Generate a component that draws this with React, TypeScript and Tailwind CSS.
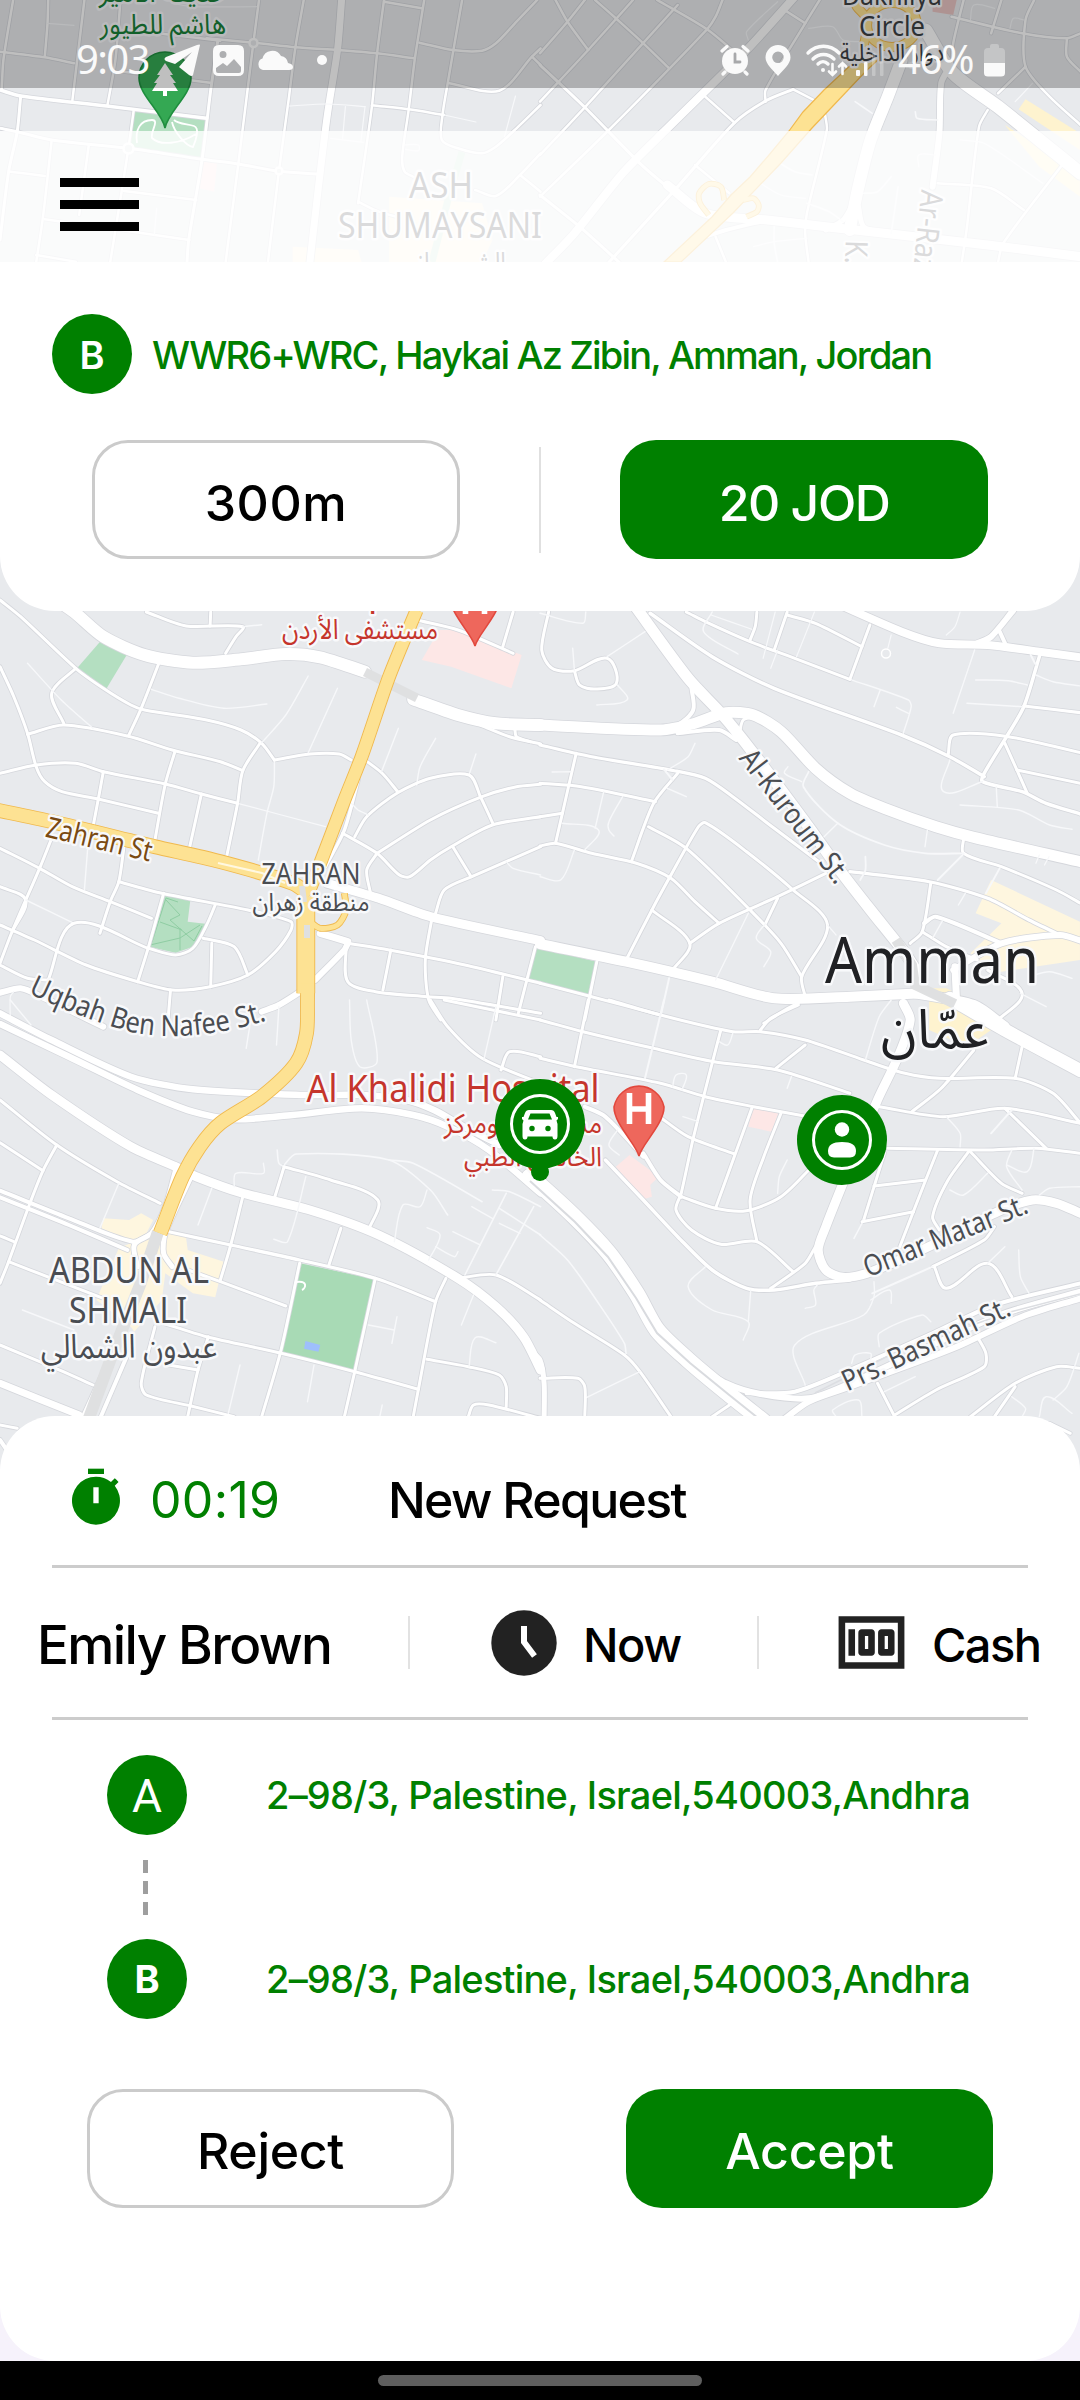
import React from "react";
import { MdMoney } from "react-icons/md";

type Road = [number, string];
interface Tile {
  x: number;
  y: number;
  roads: Road[];
}

// Road geometry, grouped by map tile: [width, points in tile units].
const TILES: Tile[] = [
  {
    x: 0,
    y: 0,
    roads: [
      [2.5, "38,0 10,180 5,265"],
      [2.5, "140,0 138,70 130,170"],
      [1.2, "138,70 215,76"],
      [2.5, "0,155 130,172 215,190"],
      [2.5, "245,0 210,303"],
      [3.5, "0,270 60,288 310,318 600,355"],
      [3, "60,288 50,395 25,515 0,720"],
      [3, "0,385 50,395 150,420 373,445 587,478 692,492 810,514 925,522"],
      [2.5, "350,0 335,180 312,316"],
      [2.5, "388,333 373,445 353,575 320,787"],
      [3, "632,125 612,270 587,478 548,720 543,787"],
      [2.5, "752,0 736,128 692,492 655,787"],
      [2.5, "640,122 500,105 380,90"],
      [2.5, "882,0 858,140 838,300 810,514 778,787"],
      [7, "992,0 980,150 950,350 925,560 900,787"],
      [2.5, "600,115 736,128 858,142 980,150 1095,160 1205,175"],
      [2.5, "1115,0 1095,160 1080,320 1040,610"],
      [2.5, "1232,0 1205,175 1187,328 1168,470 1175,515 1200,530"],
      [2.5, "1342,0 1300,250 1285,345 1283,420 1330,445 1400,460 1440,440 1500,385 1570,315"],
      [2.5, "1115,5 1225,25"],
      [2.5, "1218,128 1315,150 1400,152 1440,130 1500,65 1560,0"],
      [2.5, "1305,250 1450,272 1545,170 1570,145"],
      [2.5, "1545,170 1570,195"],
      [1.2, "838,318 950,312 1060,320"],
      [1.2, "1003,320 995,415"],
      [1.2, "1060,320 1048,425"],
      [1.2, "960,415 1055,427"],
      [2.5, "1080,316 1187,328 1290,345"],
      [1.2, "1290,345 1382,366"],
      [1.2, "1497,288 1465,410"],
      [2.5, "150,420 125,650 105,787"],
      [2.5, "30,515 130,528"],
      [2.5, "258,435 230,645"],
      [2.5, "360,573 570,600"],
      [2.5, "130,658 350,690 550,720"],
      [2.5, "105,765 220,785"],
      [1.2, "455,625 448,705"],
      [2.5, "1040,605 1100,635 1150,650"],
      [2.5, "1380,570 1440,588 1510,525 1570,460"],
      [2.5, "1510,525 1570,575"],
      [2.5, "610,248 360,215"],
      [1.2, "500,10 560,20 745,20"],
      [1.2, "1175,435 1215,435 1215,452 1178,448"],
    ],
  },
  {
    x: 540,
    y: 0,
    roads: [
      [8, "740,-10 600,150 360,395 240,520 100,700 10,797"],
      [9, "370,555 480,640 660,660 830,680 1000,700 1300,735 1570,770"],
      [4, "480,710 540,690 640,665"],
      [2.5, "45,0 80,65 140,150"],
      [2.5, "0,160 80,65 130,0"],
      [2.5, "160,0 220,55 300,130 375,205"],
      [2.5, "270,0 140,150 0,305"],
      [2.5, "400,15 130,322 0,465"],
      [2.5, "340,0 485,88 575,165"],
      [2.5, "530,0 510,50 485,88 200,390 0,590"],
      [2.5, "812,0 770,70 655,270 655,305"],
      [2.5, "710,30 770,70"],
      [1.2, "690,5 600,95 605,120"],
      [3, "735,268 660,300 565,368 400,560 200,787"],
      [2.5, "480,290 565,368"],
      [2.5, "735,268 795,300"],
      [3, "0,195 130,322 290,490 380,570"],
      [3, "0,585 115,680 230,787"],
      [12, "1050,180 1010,290 960,420 925,560 905,660 900,690"],
      [13, "1120,90 1200,220 1330,320 1570,520"],
      [6, "1190,200 1165,250 1160,400 1140,560"],
      [2.5, "1230,0 1200,130 1195,210"],
      [2.5, "1340,0 1310,100"],
      [2.5, "1195,50 1400,100 1530,115 1570,100"],
      [2.5, "1435,0 1410,60 1410,200 1480,290 1570,375"],
      [2.5, "1530,115 1530,170 1570,215"],
      [2.5, "1410,200 1330,280"],
      [1.2, "1430,250 1380,305"],
      [1.2, "1250,60 1260,15 1320,25"],
      [1.2, "1365,85 1375,55 1405,60"],
      [2.5, "1300,330 1275,380 1240,680 1225,787"],
      [2.5, "1155,550 1310,565 1405,630"],
      [2.5, "1520,490 1345,730 1330,787"],
      [2.5, "828,345 833,390 775,640 770,700 780,787"],
      [1.6, "690,485 740,515 790,525"],
      [1.2, "640,550 700,585 770,595"],
      [2.5, "550,580 450,495"],
      [1.6, "915,305 965,340"],
      [1.6, "1090,335 1095,355 1155,360"],
      [2.5, "510,710 540,787"],
      [5, "830,690 880,660 905,620"],
      [5, "1000,700 940,680 925,620"],
      [1.6, "775,610 840,635 880,665"],
      [1.6, "940,580 980,575 1020,530"],
      [1.6, "1040,560 1020,700"],
      [1.2, "780,85 850,80 880,120 930,125"],
      [1.2, "620,740 680,725 775,715"],
      [1.6, "680,680 680,730 690,787"],
      [1.2, "1100,500 1100,465 1150,465"],
      [1.2, "1220,420 1290,430 1460,550"],
    ],
  },
  {
    x: 0,
    y: 600,
    roads: [
      [12, "150,-10 215,36 300,110 420,165 560,188 700,178 830,162 930,172 1060,215"],
      [12, "1200,298 1330,345 1440,370 1570,375"],
      [9, "950,850 1100,895 1250,950 1570,1022"],
      [3.5, "1040,540 1000,690 945,800"],
      [6, "915,1140 1000,1050 1010,1030"],
      [7, "930,1000 1010,1025"],
      [3, "1010,1030 1130,1050 1350,1095 1570,1150"],
      [3, "1005,1040 1010,1145 1090,1175 1240,1190 1310,1195 1570,1240"],
      [3, "0,0 60,50 220,205 300,265 380,315 420,330 600,360 700,390 760,430 797,480"],
      [1.4, "797,480 795,560 775,640 750,780"],
      [3, "0,200 40,290 80,400 105,500 130,545 180,575 285,597 460,640"],
      [3, "80,403 185,375 370,408 500,450 640,485 705,512"],
      [3, "220,205 150,280 185,370"],
      [1.4, "80,190 178,300 270,385"],
      [3, "465,180 410,325 373,408"],
      [1.4, "440,268 520,295 650,325 775,312"],
      [3, "0,520 105,495 220,490 300,515 480,552 585,582 690,610"],
      [1.2, "690,610 945,680"],
      [3, "508,455 480,552 450,720"],
      [3, "300,515 285,600 270,680"],
      [3, "585,582 550,745"],
      [3, "755,430 705,512 690,610 658,770"],
      [1.4, "895,228 830,345 760,428"],
      [3, "797,480 900,462 985,462 1020,480"],
      [1.4, "980,265 895,458"],
      [3, "1060,480 1110,520 1155,575"],
      [1.4, "1157,385 1108,515"],
      [1.4, "1265,415 1220,500 1210,555"],
      [1.4, "1382,462 1362,525"],
      [3, "1030,710 1065,650 1155,578 1250,535 1362,525 1395,590 1432,672"],
      [3, "1095,760 1250,660 1400,590 1500,560 1570,553"],
      [3, "995,700 1095,760 1160,825 1190,830 1250,780 1310,740 1430,675 1570,650"],
      [3, "1095,760 1065,810 1075,875"],
      [3, "1315,740 1368,830"],
      [3, "1265,940 1290,870 1370,830 1570,740"],
      [3, "1255,950 1235,1080 1245,1200 1280,1260"],
      [3, "425,36 540,78 705,80 685,110 655,160"],
      [3, "612,36 610,78"],
      [1.4, "705,80 760,74"],
      [3, "1210,60 1330,90 1490,160"],
      [3, "1490,36 1460,140"],
      [3, "1395,375 1480,410 1570,432"],
      [3, "1495,385 1500,410 1540,425"],
      [1.4, "1020,610 1040,630 1070,645"],
      [1.4, "1470,785 1490,805 1570,825"],
      [3, "0,745 115,805 210,860 320,905 440,955"],
      [3, "150,715 115,805 35,995 0,1090"],
      [3, "360,740 345,845 320,905 290,1000"],
      [3, "345,845 470,880 720,930 845,965 845,990 800,1055 720,1125 610,1160 500,1170 400,1145 250,1095 100,1020 0,975"],
      [3, "0,860 75,900 35,995"],
      [1.4, "75,900 215,970"],
      [3, "140,1140 215,970 430,1045"],
      [3, "475,880 430,1045 400,1145"],
      [3, "430,1045 510,1065 560,1045 600,975 625,915"],
      [3, "590,1015 680,1040 720,1125"],
      [3, "615,1030 612,1160"],
      [3, "495,1170 488,1260"],
      [3, "0,1095 80,1135 140,1140"],
      [1.4, "255,740 245,870"],
      [6, "0,1178 60,1165 120,1190 300,1280"],
      [3, "1135,1050 1112,1170"],
      [3, "1460,1130 1440,1260"],
      [3, "1555,1040 1505,1240"],
      [1.2, "30,1260 30,1190 40,1175"],
      [6, "760,1235 810,1215 880,1170"],
    ],
  },
  {
    x: 540,
    y: 600,
    roads: [
      [11, "270,10 430,235 530,345 620,460 780,680 870,810 960,930 1060,1060 1110,1140"],
      [11, "0,375 350,390 450,370 540,338 620,345 700,395 800,505 900,580 1000,625 1150,680 1260,712 1570,785"],
      [3.5, "320,40 500,170 680,265 1050,405 1190,470 1290,530"],
      [10, "0,1032 250,1085 500,1145 680,1195 900,1190 1110,1180"],
      [8, "850,5 1050,95 1160,130 1300,135 1450,155 1570,172"],
      [6, "1375,30 1310,110 1270,130"],
      [4, "1335,95 1355,140"],
      [4, "440,265 445,330 400,375 350,385"],
      [4, "400,400 520,390 570,420"],
      [3, "580,395 590,360 620,350"],
      [3, "425,36 480,65 610,125 740,175 900,238"],
      [1.4, "900,238 1070,300 1078,320 1055,400"],
      [1.4, "988,270 970,320"],
      [1.4, "1035,322 1070,340"],
      [3, "958,75 900,238"],
      [3, "718,45 800,70 935,140"],
      [3, "718,36 680,150"],
      [3, "630,36 625,80 610,120"],
      [1.4, "500,36 475,95 575,162"],
      [1.2, "683,36 648,175"],
      [1.2, "690,150 670,205"],
      [1.2, "797,36 745,170"],
      [1.2, "497,45 615,88"],
      [1.2, "1020,105 1010,145"],
      [1.2, "1220,36 1205,80 1180,105"],
      [3.5, "1450,170 1405,320 1355,410 1290,520 1285,545 1400,575 1470,610 1570,642"],
      [2, "1425,165 1440,195"],
      [3, "1405,318 1570,338"],
      [3, "1185,465 1200,405 1360,410 1570,458"],
      [3, "1350,430 1385,510 1415,580"],
      [3, "1385,510 1570,550"],
      [1.4, "1265,240 1360,242 1415,255"],
      [1.4, "1240,310 1400,320"],
      [1.4, "1440,225 1490,245 1570,258"],
      [1.4, "1262,150 1200,340"],
      [1.4, "1190,480 1172,575 1285,545"],
      [1.4, "1325,560 1328,620"],
      [1.4, "1220,615 1390,630 1480,675 1545,688"],
      [3, "25,36 5,150 35,205 100,212 195,175 222,250 160,267 115,255 100,212"],
      [1.4, "100,212 95,145"],
      [1.4, "195,170 305,95"],
      [1.4, "225,255 253,300 165,315"],
      [1.4, "0,40 125,70 133,36"],
      [3.2, "0,435 150,470 390,512 480,535 560,590 680,685 810,785"],
      [3, "105,460 65,640 45,730"],
      [3, "0,550 120,560 335,605"],
      [3, "400,520 330,610 265,785"],
      [3, "0,650 65,640"],
      [3, "0,738 45,730 150,760 280,790 380,835 450,905 520,970"],
      [1.4, "450,430 430,470 370,510"],
      [2, "360,508 385,540"],
      [1.4, "370,565 425,590"],
      [1.4, "35,516 90,515"],
      [1.4, "185,575 160,685"],
      [1.4, "65,670 170,690 130,750"],
      [1.4, "240,590 200,665 200,690 215,708"],
      [1.4, "100,750 60,840 0,830"],
      [3, "250,1080 330,920 375,835 460,680 480,668 600,755 735,870 835,975 760,1130 770,1190"],
      [1.2, "835,975 860,1005"],
      [3, "315,680 425,745 610,930 700,1030 760,1130"],
      [3, "325,930 435,1030 385,1110"],
      [3, "435,1030 520,970 690,890 830,820"],
      [3, "690,895 655,970"],
      [1.4, "605,940 510,1140"],
      [1.4, "655,970 628,1015 670,1055 650,1100"],
      [3.2, "900,815 1130,845 1300,895 1420,960 1510,1005"],
      [3, "1230,715 1230,760 1340,800 1500,870 1570,910"],
      [1.8, "1230,762 1155,840"],
      [1.8, "780,515 765,560 865,670 1000,735 1120,760 1230,760"],
      [1.4, "720,500 710,520 760,545"],
      [1.4, "1125,690 1118,740"],
      [1.4, "865,670 825,710"],
      [1.8, "945,770 945,810 930,840"],
      [3, "1135,850 1110,995 1075,1030"],
      [4, "1115,970 1150,950 1340,1030"],
      [6, "1200,1110 1340,1030 1510,1005 1570,1022"],
      [3, "1110,995 1180,1040 1270,1080"],
      [1.4, "1170,960 1140,1015"],
      [1.8, "1335,805 1295,880"],
      [1.4, "1235,880 1215,915"],
      [1.2, "1450,765 1440,790"],
      [1.2, "1478,770 1465,795"],
      [10, "1090,1180 1260,1215 1350,1280"],
      [7, "1205,1100 1210,1210"],
      [3, "1300,1110 1400,1180 1330,1260"],
      [1.4, "1395,1180 1470,1220"],
      [3, "0,1150 150,1190 350,1245"],
      [3, "165,1085 130,1260"],
      [2, "375,1135 350,1250"],
      [3, "750,1210 720,1225 650,1270"],
      [1.4, "1420,1130 1480,1115 1545,1135"],
    ],
  },
  {
    x: 0,
    y: 1000,
    roads: [
      [6.5, "0,40 150,120 380,230 560,268 880,285 1050,285 1180,300 1260,330 1330,370 1450,435"],
      [6.5, "0,72 200,170 400,270 560,335 680,358 850,345 1050,325 1200,345 1300,380 1420,450 1570,580"],
      [9, "0,165 150,285 380,440 510,500 570,530 700,578 900,630 1100,705 1330,835 1440,920 1520,1010 1570,1110"],
      [5, "510,510 480,620 440,700 390,735 400,800"],
      [5, "555,530 480,700 475,760 500,800"],
      [4, "325,1060 240,1252"],
      [4, "372,1060 292,1252"],
      [7, "0,1150 230,1245"],
      [3, "0,300 165,435 340,545 465,610"],
      [3, "0,428 125,512"],
      [3, "165,435 125,512 85,615 25,785 0,850"],
      [4, "0,572 200,655 385,725 440,700"],
      [4, "0,592 200,675 370,750"],
      [3, "0,708 40,725"],
      [1.4, "345,550 290,685"],
      [3, "25,785 150,835 300,895"],
      [1.4, "65,930 215,990"],
      [3, "0,1035 150,1100 270,1155"],
      [3.2, "490,695 670,735 870,780 1090,835 1265,905"],
      [3, "705,590 670,735 640,840"],
      [3, "520,800 640,845 830,918"],
      [1.4, "615,565 575,675"],
      [3, "825,500 797,595"],
      [1.6, "805,450 810,490 825,500"],
      [3, "825,500 960,540 1097,600 1070,690"],
      [1.6, "825,495 860,462 1130,480 1250,570 1300,645"],
      [1.6, "1130,480 1200,490 1400,605"],
      [1.4, "888,530 835,725 795,718"],
      [1.4, "680,560 685,520 765,520 765,490"],
      [1.4, "1240,570 1220,620 1170,615 1145,725"],
      [3, "990,685 955,795"],
      [3, "870,790 815,1055 760,1250"],
      [3, "1090,835 1030,1115 1000,1250"],
      [3, "460,965 600,1010 810,1058 1030,1115 1215,1168"],
      [3, "1295,835 1265,905 1215,1168 1200,1250"],
      [3, "1240,1078 1360,1100 1450,1125 1470,1160 1470,1220"],
      [3, "1360,1250 1375,1215 1420,1215 1570,1255"],
      [3, "605,1010 575,1110 545,1250"],
      [3, "575,1110 490,1095"],
      [3, "450,980 410,1150 425,1185 555,1218 680,1250"],
      [1.4, "697,1095 663,1240"],
      [1.4, "912,1095 893,1205"],
      [1.4, "1110,1215 1103,1250"],
      [1.4, "1070,975 1145,990"],
      [1.4, "1153,950 1138,1030"],
      [1.4, "1375,885 1340,975"],
      [1.4, "1440,1028 1380,1013 1362,1100"],
      [3, "1330,835 1440,825 1570,900"],
      [1.6, "1470,580 1350,825"],
      [1.6, "1550,620 1440,825"],
      [1.6, "1430,570 1480,575 1570,620"],
      [1.4, "1370,620 1430,655"],
      [1.6, "1450,625 1570,705"],
      [1.4, "1315,695 1395,735"],
      [1.4, "1240,683 1278,705 1245,780"],
      [1.4, "1265,740 1320,770 1330,755"],
      [3, "1250,0 1300,80 1400,175 1570,250"],
      [3, "1570,170 1480,155 1455,210"],
      [3, "1290,0 1570,60"],
      [1.4, "1440,20 1405,180"],
      [1.4, "1015,0 1020,120 1045,200 1095,185 1065,0"],
      [1.4, "725,80 715,145"],
      [1.4, "810,20 803,135"],
      [1.4, "1450,670 1510,700"],
      [1.4, "30,0 90,75"],
      [3, "0,1275 50,1285"],
      [4, "0,1320 20,1350"],
    ],
  },
  {
    x: 540,
    y: 1000,
    roads: [
      [5, "-30,1050 0,1080 12,1150 12,1260"],
      [16, "-30,530 0,555 100,650 200,760 280,880 340,990 430,1080 540,1175 650,1265"],
      [6, "430,1080 540,1150 640,1182 780,1195 900,1150 1150,1030 1350,940 1570,875"],
      [4, "600,1180 740,1175 900,1110 1140,1000 1320,915 1570,850"],
      [6, "700,1265 780,1205 900,1160 1200,1045 1400,950 1570,895"],
      [9, "1055,10 1075,60 1040,170 980,300 880,550 830,680 808,750 830,810 880,832 950,820 1150,730 1330,635 1430,600 1500,610 1570,640"],
      [13, "1190,-5 1350,90 1570,212"],
      [3, "0,60 125,95 330,145 505,185 690,210 900,280"],
      [3, "200,0 350,45 560,95 640,95 770,120 940,180 1060,220 1160,235 1380,235 1490,280 1570,370"],
      [3, "0,175 105,200 350,250 480,290 620,320 780,350"],
      [3, "140,0 100,200"],
      [2, "360,0 305,235"],
      [3, "525,90 475,290 445,415 410,580 395,630 440,690 525,733 630,725 735,815"],
      [3, "750,15 670,55 640,90"],
      [3, "770,135 685,205"],
      [1.4, "520,125 545,135 560,100"],
      [1.4, "385,260 395,225 425,225 412,270"],
      [1.4, "1020,0 985,50 945,180"],
      [3, "615,325 510,625"],
      [3, "700,340 650,470 610,600 630,725"],
      [3, "410,590 510,625 600,632 700,590 790,500"],
      [3, "340,345 430,410 565,462"],
      [4, "300,460 350,540 410,590"],
      [4, "130,320 190,350 300,470"],
      [3.5, "190,480 300,600 400,710 500,810 600,865 680,870 800,850 900,840"],
      [3, "670,865 770,790 800,740"],
      [1.4, "480,800 430,860 500,930 605,965 590,1020"],
      [1.4, "612,870 605,965"],
      [1.6, "0,705 80,780 170,910 245,1030 250,1060"],
      [3, "0,900 100,970 245,1065 290,1115 380,1250"],
      [1.4, "290,1115 130,1195"],
      [3, "0,1135 110,1135 130,1160 130,1250"],
      [1.4, "770,1155 740,1035 940,945 970,890 970,845"],
      [1.4, "985,1040 985,1000 1110,945 1135,965"],
      [1.4, "1020,910 1015,870 960,900"],
      [1.4, "770,925 800,915 795,870 805,855"],
      [1.4, "905,1090 915,1065 960,1060 960,1080"],
      [3, "985,320 1170,350 1350,325 1570,370"],
      [3, "1080,335 1165,265 1260,150"],
      [3, "1400,140 1380,235"],
      [3, "1350,325 1470,445"],
      [2, "1370,330 1310,400"],
      [3, "1010,445 1290,450 1440,445 1570,460"],
      [3, "1000,460 940,660"],
      [1.6, "940,660 912,715"],
      [3, "1155,450 1120,540 1045,740"],
      [3, "970,558 1120,540"],
      [3, "935,665 1085,635"],
      [3, "1245,455 1185,540 1140,650 1160,690"],
      [3, "1250,455 1340,550 1400,580"],
      [1.4, "1190,570 1230,585 1300,520"],
      [1.4, "1370,450 1355,500 1400,570"],
      [1.4, "1435,445 1415,515 1355,495"],
      [1.4, "1180,350 1220,400 1220,440"],
      [1.4, "1450,585 1480,565 1570,560"],
      [3, "1145,800 1180,865 1300,790 1370,890"],
      [3, "1320,680 1290,720 1140,800"],
      [2, "1140,800 965,880"],
      [1.4, "1390,750 1395,830 1420,880"],
      [1.4, "1350,740 1300,790"],
      [3, "980,1150 1030,1250"],
      [3, "1030,1245 1150,1170 1290,1100 1295,1060 1270,1010"],
      [3, "1250,1250 1380,1150 1500,1100 1570,1105"],
      [3, "1320,1250 1380,1160"],
      [1.4, "860,1250 850,1230 925,1200 935,1250"],
      [1.4, "1000,1175 1090,1130"],
      [1.4, "1450,1250 1470,1190 1545,1240"],
      [1.4, "1370,1190 1410,1225 1400,1250"],
      [1.4, "1565,1060 1530,1160 1490,1200"],
      [3, "500,1250 550,1215"],
      [1.4, "718,480 695,530 690,580"],
      [1.4, "730,230 718,265"],
      [1.4, "415,350 460,365"],
      [1.4, "230,465 200,435 225,390"],
      [3, "1480,1270 1540,1300"],
    ],
  },
];

interface Area {
  x: number;
  y: number;
  fill: string;
  pts: string;
}

const AREAS: Area[] = [
  { x: 0, y: 0, fill: "#b4dfc1", pts: "390,333 598,357 588,475 377,450" },
  { x: 0, y: 0, fill: "#fde7e6", pts: "590,485 630,490 622,575 578,565" },
  { x: 0, y: 0, fill: "#fef6df", pts: "1130,590 1400,610 1430,720 1400,787 1130,787" },
  { x: 0, y: 0, fill: "#fef6df", pts: "850,740 1040,750 1050,787 850,787" },
  { x: 540, y: 0, fill: "#e9c5c3", pts: "1140,0 1210,0 1200,45 1140,35" },
  { x: 540, y: 0, fill: "#fef3cf", pts: "1410,298 1568,400 1568,450 1390,328" },
  { x: 540, y: 0, fill: "#fef3cf", pts: "1350,375 1568,520 1568,590 1450,500" },
  { x: 0, y: 600, fill: "#b4dfc1", pts: "305,108 378,148 308,268 225,203" },
  { x: 0, y: 600, fill: "#b4dfc1", pts: "478,885 553,898 545,965 603,972 575,1035 510,1058 432,1040" },
  { x: 0, y: 600, fill: "#fde7e6", pts: "1275,90 1330,90 1515,165 1485,265 1310,200 1225,180" },
  { x: 540, y: 600, fill: "#b4dfc1", pts: "-20,1040 0,1045 165,1085 140,1185 0,1145 -35,1137" },
  { x: 540, y: 600, fill: "#fef6df", pts: "1310,840 1568,965 1568,1080 1310,1120 1250,1060 1340,970 1265,940" },
  { x: 540, y: 600, fill: "#fef3cf", pts: "1130,1165 1180,1165 1325,1240 1310,1290 1240,1340 1130,1290" },
  { x: 0, y: 1000, fill: "#a8dab5", pts: "872,790 1090,838 1030,1112 815,1055" },
  { x: 0, y: 1000, fill: "#9ebffb", pts: "887,1023 930,1035 925,1055 883,1046" },
  { x: 0, y: 1000, fill: "#fef6df", pts: "300,655 375,660 410,640 445,660 420,710 370,720 295,685" },
  { x: 0, y: 1000, fill: "#fef6df", pts: "490,700 540,710 545,750 650,785 625,892 560,880 480,820 470,900 390,995 380,980 280,900 300,850 345,745 400,720" },
  { x: 540, y: 1000, fill: "#fde7e6", pts: "260,465 345,530 320,555 325,590 300,598 220,500" },
  { x: 540, y: 1000, fill: "#fde7e6", pts: "618,320 692,340 672,395 605,380" },
];

function project(pts: string, ox: number, oy: number): [number, number][] {
  return pts.split(" ").map((p) => {
    const [x, y] = p.split(",").map(Number);
    return [ox + x / 2.904, oy + y / 3];
  });
}

// Catmull-Rom spline through the projected points.
function smooth(pts: string, ox: number, oy: number): string {
  const p = project(pts, ox, oy);
  let d = `M${p[0][0].toFixed(1)} ${p[0][1].toFixed(1)}`;
  for (let i = 0; i < p.length - 1; i++) {
    const a = p[Math.max(i - 1, 0)];
    const b = p[i];
    const c = p[i + 1];
    const e = p[Math.min(i + 2, p.length - 1)];
    const len = Math.hypot(c[0] - b[0], c[1] - b[1]);
    const t1 = Math.hypot(c[0] - a[0], c[1] - a[1]) || 1;
    const t2 = Math.hypot(e[0] - b[0], e[1] - b[1]) || 1;
    const k = len * 0.27;
    const x1 = b[0] + ((c[0] - a[0]) / t1) * k;
    const y1 = b[1] + ((c[1] - a[1]) / t1) * k;
    const x2 = c[0] - ((e[0] - b[0]) / t2) * k;
    const y2 = c[1] - ((e[1] - b[1]) / t2) * k;
    d += `C${x1.toFixed(1)} ${y1.toFixed(1)} ${x2.toFixed(1)} ${y2.toFixed(1)} ${c[0].toFixed(1)} ${c[1].toFixed(1)}`;
  }
  return d;
}

const ROADS = TILES.flatMap((t) => t.roads.map(([w, pts]) => ({ w, d: smooth(pts, t.x, t.y) })));

const HIGHWAYS = [
  { w: 12, d: smooth("1210,30 1130,230 1050,470 1000,600 930,790 895,880", 0, 600) },
  { w: 13, d: smooth("-10,630 150,665 450,740 640,785 850,850 900,885", 0, 600) },
  { w: 17, d: smooth("888,890 888,1180", 0, 600) },
  { w: 13, d: smooth("893,1150 893,1200 890,1300 860,1390 760,1490 640,1570 580,1640 530,1730 465,1900", 0, 600) },
  { w: 5, d: smooth("1000,880 1005,930 980,975 930,985 900,965", 0, 600) },
  { w: 4, d: smooth("535,600 525,560 490,552 462,580 465,610 490,645", 540, 0) },
  { w: 4, d: smooth("590,600 620,595 635,615 630,635 600,650", 540, 0) },
  { w: 8, d: smooth("940,140 950,60 920,20 905,-10", 540, 0) },
];

const label = "Noto Sans, Open Sans, sans-serif";
const arabic = "Noto Sans Arabic, Noto Naskh Arabic, DejaVu Sans, sans-serif";

interface LabelProps {
  x: number;
  y: number;
  size: number;
  width: number;
  fill?: string;
  rotate?: number;
  ar?: boolean;
  children: string;
}

function Label({ x, y, size, width, fill = "#4a4d52", rotate = 0, ar = false, children }: LabelProps) {
  return (
    <text
      transform={`translate(${x} ${y}) rotate(${rotate})`}
      x={0}
      y={0}
      textAnchor="middle"
      fontFamily={ar ? arabic : label}
      fontSize={size}
      textLength={width}
      lengthAdjust="spacingAndGlyphs"
      fill={fill}
      stroke="#f8f9fb"
      strokeWidth={5}
      strokeLinejoin="round"
      paintOrder="stroke"
    >
      {children}
    </text>
  );
}

function HospitalPin({ x, y }: { x: number; y: number }) {
  return (
    <g transform={`translate(${x} ${y})`}>
      <path d="M0 0C-3 -12 -25 -32 -25 -49A25.5 26 0 0 1 25 -49C25 -32 3 -12 0 0Z" fill="#ee675c" stroke="#e2483d" strokeWidth="1.6" />
      <path d="M-9.500 -63V-32M9.500 -63V-32M-9.500 -47H9.500" stroke="#fff" strokeWidth="5.600" fill="none" />
    </g>
  );
}

function CityMap() {
  return (
    <svg className="absolute inset-0" width="1080" height="2400" viewBox="0 0 1080 2400" fill="none" aria-label="Map of Amman">
      <rect width="1080" height="2400" fill="#e8eaed" />
      {AREAS.map((a, i) => (
        <polygon key={i} fill={a.fill} points={project(a.pts, a.x, a.y).map((p) => p.join(",")).join(" ")} />
      ))}
      <path d="M462 152L448 200L432 262" stroke="#d3ecda" strokeWidth="7" />
      <g stroke="#8fcda3" strokeWidth="1">
        <path d="M166 900L180 915L170 920L194 941L202 926M152 942L166 898L178 902M150 945L180 938L200 925M180 928V950M160 922L182 930" />
      </g>
      <g strokeLinecap="round" strokeLinejoin="round">
        {ROADS.filter((r) => r.w > 2).map((r, i) => (
          <path key={i} d={r.d} stroke="#d5d7dc" strokeWidth={r.w + 1.6} />
        ))}
        {ROADS.map((r, i) => (
          <path key={i} d={r.d} stroke={r.w > 2 ? "#ffffff" : "#f7f8fa"} strokeWidth={r.w} />
        ))}
      </g>
      <g stroke="#fff" strokeWidth="2.5">
        <circle cx="253.5" cy="43" r="4" fill="#e8eaed" />
        <circle cx="128.5" cy="148.500" r="5" fill="#e8eaed" />
        <circle cx="279" cy="171" r="3.500" fill="#e8eaed" />
        <circle cx="886" cy="653.500" r="4.500" strokeWidth="1.500" />
        <path d="M137 143C135 130 140 120 152 120C160 120 150 132 152 138C160 146 180 144 196 134M172 122C174 132 186 146 193 147C196 140 200 128 194 126C188 124 178 124 174 120" strokeWidth="1.8" />
        <path d="M296 882C308 880 306 888 302 890" strokeWidth="2" transform="translate(0 400)" />
      </g>
      <path d="M530 1181L575 1222L608 1257L636 1298L657 1333L690 1363L728 1394L758 1418" stroke="#d9dbdf" strokeWidth="2" />
      <path d="M815 1393L900 1350L1010 1312L1080 1294" stroke="#dcdee2" strokeWidth="1.500" />
      <g stroke="#dfe0e1" strokeWidth="9">
        <path d="M365 672L417 698" />
        <path d="M158 1232L140 1285L114 1350L89 1418" strokeWidth="12" />
        <path d="M896 940L912 965L915 985L955 1004" strokeWidth="10" />
      </g>

      <g strokeLinecap="butt">
        {HIGHWAYS.map((h, i) => (
          <path key={i} d={h.d} stroke="#f0b94e" strokeWidth={h.w + 1.8} />
        ))}
        <ellipse cx="892" cy="25" rx="25" ry="22" stroke="#f0b94e" strokeWidth="10" />
        <path d="M867 50L824 90L803 112L789 131L769 155L750 177L731 195L712 217L664 262H681L733 213L781 163L812 128L831 108L867 70L880 58Z" fill="#fde293" stroke="#f0b94e" strokeWidth="1.200" />
        {HIGHWAYS.map((h, i) => (
          <path key={i} d={h.d} stroke="#fde293" strokeWidth={h.w} />
        ))}
        <ellipse cx="892" cy="25" rx="25" ry="22" stroke="#fde293" strokeWidth="8" />
        <path d="M218 863L262 873L285 883" stroke="#fff8e1" strokeWidth="2" />
        <path d="M302 886L304 902M307 925V938" stroke="#dfe0e1" strokeWidth="6" />
      </g>

      <Label ar x={163} y={2} size={28} width={128} fill="#188038">حديقة الأمير</Label>
      <Label ar x={163} y={34} size={28} width={126} fill="#188038">هاشم للطيور</Label>
      <g>
        <path d="M165 128C162 112 139 95 139 78A26 26 0 0 1 191 78C191 95 168 112 165 128Z" fill="#34a853" stroke="#1e8e3e" strokeWidth="1.600" />
        <path d="M165 63L173 75H170L176 83H173L178 91H167V96H163V91H152L157 83H154L160 75H157Z" fill="#fff" />
      </g>
      <Label x={441} y={198} size={36} width={64}>ASH</Label>
      <Label x={440} y={238} size={36} width={204}>SHUMAYSANI</Label>
      <Label ar x={453} y={276} size={33} width={106}>الشميساني</Label>
      <Label x={892} y={5} size={28} width={100} fill="#3c4043">Dakhliya</Label>
      <Label x={892} y={36} size={28} width={66} fill="#3c4043">Circle</Label>
      <Label ar x={892} y={61} size={24} width={104} fill="#3c4043">دوار الداخلية</Label>
      <Label x={915} y={252} size={31} width={126} rotate={96}>Ar-Razi St.</Label>
      <Label x={844} y={290} size={31} width={100} rotate={92}>K. Ali St.</Label>

      <Label x={372} y={605} size={39} width={140} fill="#c5352c">Hospital</Label>
      <Label ar x={360} y={639} size={28} width={156} fill="#c5352c">مستشفى الأردن</Label>
      <HospitalPin x={475} y={646} />
      <Label x={97} y={849} size={29} width={108} rotate={13.5} fill="#7a4a12">Zahran St</Label>
      <Label x={311} y={884} size={29} width={99}>ZAHRAN</Label>
      <Label ar x={311} y={911} size={25} width={117}>منطقة زهران</Label>
      <path id="uqbah" d="M28 993Q80 1018 130 1032Q195 1045 280 1016" />
      <text fontFamily={label} fontSize="29" fill="#4a4d52" stroke="#f8f9fb" strokeWidth="5" paintOrder="stroke" strokeLinejoin="round">
        <textPath href="#uqbah" textLength="248" lengthAdjust="spacingAndGlyphs">
          Uqbah Ben Nafee St.
        </textPath>
      </text>
      <Label x={787} y={822} size={29} width={160} rotate={52.5}>Al-Kuroum St.</Label>
      <Label x={932} y={983} size={64} width={214} fill="#202124">Amman</Label>
      <Label ar x={935} y={1048} size={54} width={108} fill="#202124">عمّان</Label>
      <Label x={453} y={1102} size={39} width={293} fill="#c5352c">Al Khalidi Hospital</Label>
      <Label ar x={523} y={1133} size={27} width={158} fill="#c5352c">مستشفى ومركز</Label>
      <Label ar x={533} y={1166} size={27} width={138} fill="#c5352c">الخالدي الطبي</Label>
      <HospitalPin x={639} y={1156} />
      <Label x={129} y={1283} size={36} width={160}>ABDUN AL</Label>
      <Label x={128} y={1323} size={36} width={118}>SHMALI</Label>
      <Label ar x={129} y={1358} size={33} width={176}>عبدون الشمالي</Label>
      <Label x={949} y={1245} size={29} width={174} rotate={-22}>Omar Matar St.</Label>
      <Label x={930} y={1353} size={29} width={182} rotate={-25}>Prs. Basmah St.</Label>

      {/* driver marker */}
      <circle cx="540" cy="1172" r="9" fill="#008000" />
      <circle cx="540" cy="1124" r="45" fill="#008000" />
      <circle cx="540" cy="1124" r="28.500" stroke="#fff" strokeWidth="3" />
      <path
        fillRule="evenodd"
        fill="#fff"
        d="M529 1110H551Q554 1110 555 1113L556.500 1117H558V1119L556.500 1120.500L557.500 1124V1136Q557.500 1139.500 555 1139.500Q552.500 1139.500 552.500 1136.500H527.500Q527.500 1139.500 525 1139.500Q522.500 1139.500 522.500 1136V1124L523.500 1120.500L522 1119V1117H523.500L525 1113Q526 1110 529 1110ZM530.500 1113.500L528 1119.500H552L549.500 1113.500ZM532 1125.800A2.700 2.700 0 1 0 532 1131.200A2.700 2.700 0 1 0 532 1125.800ZM548 1125.800A2.700 2.700 0 1 0 548 1131.200A2.700 2.700 0 1 0 548 1125.800Z"
      />
      {/* passenger marker */}
      <circle cx="842" cy="1140" r="45" fill="#008000" />
      <circle cx="842" cy="1140" r="28.500" stroke="#fff" strokeWidth="3" />
      <circle cx="842" cy="1129.500" r="7.200" fill="#fff" />
      <path d="M828 1151Q828 1142 842 1142Q856 1142 856 1151Q856 1157.500 850 1157.500H834Q828 1157.500 828 1151Z" fill="#fff" />
    </svg>
  );
}

function StatusBar() {
  return (
    <div className="flex h-[88px] items-start justify-between bg-black/25 pl-[76px] pr-[75px] pt-[42px] text-[#fafafa]">
      <div className="flex h-[36px] items-center">
        <span className="-mt-[3px] w-[88px] whitespace-nowrap font-['Noto_Sans'] text-[40px] leading-none tracking-[-1.700px]">9:03</span>
        <svg width="36" height="32" viewBox="0 0 36 32" fill="#fafafa">
          <path d="M36 1L29 31Q28 33 25 31L15 23L28 8L11 20L2 17Q-1 15 2 13L33 1Q36 0 36 1Z" />
        </svg>
        <svg className="ml-[13px]" width="31" height="31" viewBox="0 0 31 31">
          <path
            fillRule="evenodd"
            fill="#fafafa"
            d="M6 0H25Q31 0 31 6V25Q31 31 25 31H6Q0 31 0 25V6Q0 0 6 0ZM10 6A3.500 3.500 0 1 0 10 13A3.500 3.500 0 1 0 10 6ZM3 23V26Q3 28 5 28H26Q28 28 28 26V22L21 14L14 21L10 18Z"
          />
        </svg>
        <svg className="ml-[13px]" width="36" height="20" viewBox="0 0 36 20" fill="#fafafa">
          <path d="M6 20A6 6 0 0 1 5.500 8.500A10 10 0 0 1 24 6Q30 7 31 13Q36 14 36 17Q36 20 32 20Z" />
        </svg>
        <i className="ml-[24px] size-[10px] rounded-full bg-[#fafafa]" />
      </div>
      <div className="flex h-[36px] items-center">
        <svg width="30" height="32" viewBox="0 0 30 32" fill="none" stroke="#fafafa" strokeLinecap="round">
          <circle cx="15" cy="17" r="13" fill="#fafafa" stroke="none" />
          <path d="M2 7L7 2.500M28 7L23 2.500M5 28L3 30M25 28L27 30" strokeWidth="3.200" />
          <path d="M15 10V18H20" stroke="#a8a9ab" strokeWidth="2.800" />
        </svg>
        <svg className="ml-[15px]" width="26" height="32" viewBox="0 0 26 32">
          <path fillRule="evenodd" fill="#fafafa" d="M13 1A12.500 12.500 0 0 1 25.500 13.500C25.500 20 18 26 13 32C8 26 .5 20 .5 13.500A12.500 12.500 0 0 1 13 1ZM13 7.500A5.800 5.800 0 1 0 13 19.100A5.800 5.800 0 1 0 13 7.500Z" />
        </svg>
        <svg className="ml-[14px]" width="44" height="34" viewBox="0 0 44 34" fill="none" stroke="#fafafa" strokeWidth="3.400" strokeLinecap="round">
          <path d="M3 10C12 1 25 1 34 10M8 16C14 10 23 10 29 16" />
          <path d="M13 21C16 18 20 18 23 21" />
          <circle cx="18" cy="27" r="2" fill="#fafafa" stroke="none" />
          <path d="M27.500 21V32M24 28.500L27.500 32L31 28.500M37.500 31V20M34 23.500L37.500 20L41 23.500" strokeWidth="2.600" />
        </svg>
        <svg className="ml-[6px]" width="30" height="32" viewBox="0 0 30 32" fill="#fafafa">
          <rect x="1" y="26" width="4" height="6" rx="1" />
          <rect x="9" y="18" width="3.500" height="14" rx="1" />
          <rect x="17" y="9" width="3.500" height="23" rx="1" opacity=".3" />
          <rect x="25" y="2" width="3.500" height="30" rx="1" opacity=".3" />
        </svg>
        <span className="-mt-[3px] ml-[13px] w-[86px] whitespace-nowrap font-['Noto_Sans'] text-[40px] leading-none tracking-[-1.300px]">46%</span>
        <svg width="21" height="34" viewBox="0 0 21 34" fill="#fafafa">
          <path d="M6 3Q6 1 8 1H13Q15 1 15 3V5H17Q21 5 21 9V20H0V9Q0 5 4 5H6Z" opacity=".3" />
          <path d="M0 20H21V30Q21 33.500 17 33.500H4Q0 33.500 0 30Z" />
        </svg>
      </div>
    </div>
  );
}

function Badge({ children, className = "" }: { children: string; className?: string }) {
  return (
    <div className={`flex size-[80px] shrink-0 items-center justify-center rounded-full bg-[#008000] text-white ${className}`}>{children}</div>
  );
}

function TripCard() {
  return (
    <section className="h-[349px] rounded-b-[55px] bg-white px-[52px] pt-[52px]">
      <div className="flex items-center">
        <Badge className="pt-[2px] text-[38px] font-semibold">B</Badge>
        <p className="ml-[20px] whitespace-nowrap pt-[2px] text-[38px] font-medium tracking-[-1.800px] text-[#008000]">WWR6+WRC, Haykai Az Zibin, Amman, Jordan</p>
      </div>
      <div className="mt-[46px] flex items-center justify-between pl-[40px] pr-[40px]">
        <div className="flex h-[119px] w-[368px] items-center justify-center rounded-[36px] border-[3px] border-[#cbcbcb] pt-[7px] text-[50px] font-medium tracking-[0.600px] text-black">300m</div>
        <i className="h-[106px] w-[2px] bg-[#e0e0e0]" />
        <div className="flex h-[119px] w-[368px] items-center justify-center rounded-[36px] bg-[#008000] pt-[7px] text-[50px] font-medium tracking-[-1.500px] text-white">20 JOD</div>
      </div>
    </section>
  );
}

function Stopwatch() {
  return (
    <svg width="64" height="64" viewBox="0 0 24 24" fill="#008000" className="shrink-0">
      <path d="M9 1h6v2H9z" />
      <path
        fillRule="evenodd"
        d="M19.030 7.390l1.420-1.420c-.43-.51-.9-.99-1.410-1.410l-1.420 1.420A8.962 8.962 0 0 0 12 4a9 9 0 1 0 7.030 3.390zM13 14h-2V8h2v6z"
      />
    </svg>
  );
}

function Clock() {
  return (
    <svg width="66" height="66" viewBox="0 0 66 66" className="ml-[81px] mr-[26px] shrink-0">
      <circle cx="33" cy="33" r="32.700" fill="#222222" />
      <path d="M33 16V32L43.500 46" fill="none" stroke="#fff" strokeWidth="6" />
    </svg>
  );
}

function RequestSheet() {
  return (
    <div className="bg-[linear-gradient(#e8eaed00_50%,#f6f2fb_50%)]">
      <section className="flex h-[945px] flex-col rounded-[55px] bg-white">
        <div className="mx-[52px] flex h-[152px] items-center border-b-[3px] border-[#cccccc] pt-[15px]">
          <div className="ml-[12px]">
            <Stopwatch />
          </div>
          <span className="ml-[22px] w-[238px] pt-[4px] text-[50px] font-normal tracking-[0.300px] text-[#008000]">00:19</span>
          <h1 className="whitespace-nowrap pt-[4px] text-[50px] font-medium tracking-[-1.700px] text-black">New Request</h1>
        </div>

        <div className="flex h-[149px] shrink-0 items-center pl-[37px] text-black">
          <span className="w-[371px] whitespace-nowrap pt-[6px] text-[53px] font-medium tracking-[-1.600px]">Emily Brown</span>
          <i className="h-[53px] w-[2px] bg-[#e2e2e2]" />
          <Clock />
          <span className="w-[174px] pt-[6px] text-[47px] font-medium tracking-[-1.500px]">Now</span>
          <i className="h-[53px] w-[2px] shrink-0 bg-[#e2e2e2]" />
          <MdMoney className="ml-[73px] size-[79px] shrink-0 text-[#222222]" />
          <span className="ml-[21px] pt-[6px] text-[47px] font-medium tracking-[-1.600px]">Cash</span>
        </div>
        <hr className="mx-[52px] border-t-[3px] border-[#cccccc]" />

        <div className="mt-[35px] flex items-center pl-[107px]">
          <Badge className="pt-[2px] font-['Roboto'] text-[46px] font-normal">A</Badge>
          <p className="ml-[79px] whitespace-nowrap text-[38px] font-medium tracking-[-0.780px] text-[#008000]">2–98/3, Palestine, Israel,540003,Andhra</p>
        </div>
        <div className="ml-[143px] flex h-[104px] w-[5px] flex-col gap-[8px] pt-[25px]">
          <i className="h-[13px] bg-[#9e9e9e]" />
          <i className="h-[13px] bg-[#9e9e9e]" />
          <i className="h-[13px] bg-[#9e9e9e]" />
        </div>
        <div className="flex items-center pl-[107px]">
          <Badge className="text-[38px] font-bold">B</Badge>
          <p className="ml-[79px] whitespace-nowrap text-[38px] font-medium tracking-[-0.780px] text-[#008000]">2–98/3, Palestine, Israel,540003,Andhra</p>
        </div>

        <div className="mt-[70px] flex justify-between px-[87px]">
          <button className="h-[119px] w-[367px] rounded-[36px] border-[3px] border-[#cbcbcb] pt-[6px] text-[50px] font-medium tracking-[-0.300px] text-black">Reject</button>
          <button className="h-[119px] w-[367px] rounded-[36px] bg-[#008000] pt-[6px] text-[50px] font-medium tracking-[-0.300px] text-white">Accept</button>
        </div>
      </section>
    </div>
  );
}

export default function App() {
  return (
    <main className="relative h-[2400px] w-[1080px] overflow-hidden bg-[#e8eaed] font-['Inter',sans-serif]">
      <CityMap />
      <div className="relative flex h-full flex-col">
        <StatusBar />
        <header className="mt-[43px] flex h-[131px] items-center bg-white/80 pl-[60px] pt-[16px]">
          <div className="flex w-[79px] flex-col gap-[13px]">
            <i className="h-[9px] bg-black" />
            <i className="h-[9px] bg-black" />
            <i className="h-[9px] bg-black" />
          </div>
        </header>
        <TripCard />
        <div className="flex-1" />
        <RequestSheet />
        <nav className="flex h-[39px] shrink-0 justify-center bg-black pt-[14px]">
          <i className="h-[11px] w-[324px] rounded-full bg-[#5e5e5e]" />
        </nav>
      </div>
    </main>
  );
}
